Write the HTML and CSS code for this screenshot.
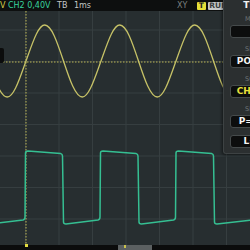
FILE: index.html
```html
<!DOCTYPE html>
<html lang="en">
<head>
    <meta charset="UTF-8">
    <title>Scope</title>
    <meta name="viewport" content="width=device-width, initial-scale=1.0">
    <link rel="stylesheet" href="styles.css">
</head>
<body>

    <div class="scope">
        <div class="topbar">
            <span class="ch1">V</span>
            <span class="ch2">CH2 0,40V</span>
            <span class="tb">TB</span>
            <span class="tb-val">1ms</span>
            <span class="xy">XY</span>
            <span class="tag trig">T</span>
            <span class="tag run">RUN</span>
        </div>

        <div class="screen">
            <svg class="plot" viewBox="0 11 250 234" preserveAspectRatio="none">
                <g class="grid">
                    <line x1="0" y1="30" x2="250" y2="30"/>
                    <line x1="0" y1="61.5" x2="250" y2="61.5"/>
                    <line x1="0" y1="93" x2="250" y2="93"/>
                    <line x1="0" y1="124.5" x2="250" y2="124.5"/>
                    <line x1="0" y1="156" x2="250" y2="156"/>
                    <line x1="0" y1="187.5" x2="250" y2="187.5"/>
                    <line x1="0" y1="219" x2="250" y2="219"/>
                    <line x1="25.5" y1="11" x2="25.5" y2="245"/>
                    <line x1="59" y1="11" x2="59" y2="245"/>
                    <line x1="92.5" y1="11" x2="92.5" y2="245"/>
                    <line x1="126" y1="11" x2="126" y2="245"/>
                    <line x1="159.5" y1="11" x2="159.5" y2="245"/>
                    <line x1="193" y1="11" x2="193" y2="245"/>
                    <line x1="226.5" y1="11" x2="226.5" y2="245"/>
                </g>

                <!-- cursors -->
                <line class="cursor" x1="0" y1="62" x2="250" y2="62"/>
                <line class="cursor" x1="26" y1="11" x2="26" y2="245"/>
                <rect class="marker" x="-4" y="48" width="8" height="15" rx="2"/>

                <!-- CH1 sine -->
                <path class="ch1-trace" d="M -11.5 61 C -5.23 79.9, 0.54 97, 7.25 97
                    S 19.73 78.1 26 61 S 38.04 25 44.75 25 S 57.23 42.1 63.5 61 S 75.54 97 82.25 97
                    S 94.73 78.1 101 61 S 113.04 25 119.75 25 S 132.23 42.1 138.5 61 S 150.54 97 157.25 97
                    S 169.73 78.1 176 61 S 188.04 25 194.75 25 S 207.23 42.1 213.5 61 S 225.54 97 232.25 97
                    S 244.73 78.1 251 61 S 263.04 25 269.75 25"/>

                <!-- CH2 square -->
                <path class="ch2-trace" d="M -11 224 L 23 220 Q 25 219.5 25 217 L 25.5 153 Q 25.5 151 28 151
                    L 60.5 153.5 Q 62.5 154 62.5 156 L 63.5 222 Q 63.5 224 66 224
                    L 98 220 Q 100 219.5 100 217 L 100.5 153 Q 100.5 151 103 151
                    L 136 153.5 Q 138 154 138 156 L 139 222 Q 139 224 141.5 224
                    L 173.5 220 Q 175.5 219.5 175.5 217 L 176 153 Q 176 151 178.5 151
                    L 211.5 153.5 Q 213.5 154 213.5 156 L 214.5 222 Q 214.5 224 217 224 L 252 220"/>
            </svg>
        </div>

        <div class="bottombar">
            <span class="trig-pos"></span>
            <span class="window"><i></i></span>
        </div>

        <div class="panel">
            <div class="panel-title">TRIGGER</div>
            <div class="group">
                <div class="label">MODE</div>
                <div class="btn">AUTO</div>
            </div>
            <div class="group">
                <div class="label">SLOPE</div>
                <div class="btn">POSITIVE ↑</div>
            </div>
            <div class="group">
                <div class="label">SOURCE</div>
                <div class="btn active">CHANNEL 2</div>
            </div>
            <div class="group">
                <div class="label">SET</div>
                <div class="btn">P=CENTER</div>
            </div>
            <div class="btn">L=LEVEL</div>
        </div>
    </div>

</body>
</html>
```

FILE: styles.css
```css
* {
    box-sizing: border-box;
}

body {
    margin: 0;
    background-color: #272e30;
    font-family: 'DejaVu Sans', sans-serif;
    overflow: hidden;
}

.scope {
    position: relative;
    width: 250px;
    height: 250px;
    display: flex;
    flex-direction: column;
    overflow: hidden;
}

/* top status line */
.topbar {
    height: 11px;
    display: flex;
    align-items: center;
    background-color: #0d0f0f;
    font-size: 8px;
    line-height: 11px;
    white-space: nowrap;
    padding-right: 21px;
}

.ch1 {
    color: #d6d04a;
}

.ch2 {
    color: #38d29e;
    margin-left: 2.5px;
}

.tb {
    color: #c3c7c7;
    margin-left: 6.5px;
}

.tb-val {
    color: #c3c7c7;
    margin-left: 6.5px;
}

.xy {
    color: #7b8080;
    margin-left: auto;
}

.tag {
    height: 8px;
    line-height: 8px;
    font-size: 7.5px;
    font-weight: bold;
    padding: 0 1.5px;
    border-radius: 1px;
    color: #222;
}

.trig {
    margin-left: 9.5px;
    width: 9px;
    text-align: center;
    background-color: #e6df38;
}

.run {
    margin-left: 2px;
    background-color: #c6c8c8;
    color: #3a3d3e;
}

/* plot area */
.screen {
    flex: 1;
}

.plot {
    display: block;
    width: 250px;
    height: 234px;
}

.grid line {
    stroke: #363e40;
    stroke-width: 1;
}

.cursor {
    stroke: #bdb755;
    stroke-width: 1;
    stroke-dasharray: 1.5 1.5;
}

.marker {
    fill: #0b0c0c;
}

.ch1-trace {
    fill: none;
    stroke: #c6c267;
    stroke-width: 1.3;
}

.ch2-trace {
    fill: none;
    stroke: #35bf92;
    stroke-width: 1.5;
}

/* bottom strip */
.bottombar {
    height: 5px;
    display: flex;
    background-color: #0b0c0c;
    position: relative;
}

.trig-pos {
    width: 3px;
    height: 3px;
    margin: -1px 0 0 24.5px;
    background-color: #e2dc40;
}

.window {
    width: 34px;
    margin-left: 90.5px;
    background-color: #5b6061;
    display: flex;
}

.window i {
    width: 2px;
    height: 3px;
    margin-left: 6px;
    background-color: #c9c24c;
}

/* trigger menu */
.panel {
    position: absolute;
    top: 0;
    left: 223px;
    width: 84px;
    display: flex;
    flex-direction: column;
    gap: 7px;
    padding: 1px 6px 5px;
    background-color: #2b2f30;
    border-left: 1px solid #3d4243;
    border-bottom: 1px solid #3d4243;
    border-bottom-left-radius: 3px;
    box-shadow: -1px 1px 3px rgba(0, 0, 0, 0.5);
}

.panel-title {
    color: #f2f2f2;
    font-size: 9px;
    font-weight: bold;
    line-height: 9px;
    text-align: center;
    margin-bottom: -2px;
}

.group {
    display: flex;
    flex-direction: column;
    gap: 1px;
}

.label {
    color: #6e7475;
    font-size: 6.5px;
    line-height: 9px;
    padding-left: 15px;
}

.btn {
    height: 13px;
    line-height: 11px;
    font-size: 9px;
    font-weight: bold;
    color: #f4f4f4;
    text-align: center;
    white-space: nowrap;
    background-color: #0c0d0d;
    border: 1px solid #454a4b;
    border-radius: 3px;
}

.btn.active {
    color: #e8e03c;
}
```
